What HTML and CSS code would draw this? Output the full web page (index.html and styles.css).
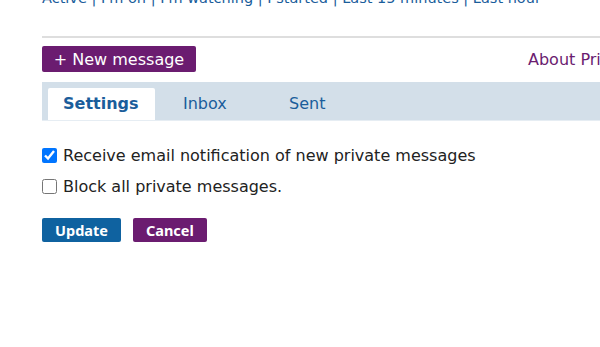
FILE: index.html
```html
<!DOCTYPE html>
<html lang="en">
<head>
  <meta charset="UTF-8">
  <title>Private messages</title>
  <link rel="stylesheet" href="styles.css">
</head>
<body>
  <div class="page">
    <div class="filters">
      <a href="#">Active</a> | <a href="#">I'm on</a> | <a href="#">I'm watching</a> | <a href="#">I started</a> | <a href="#">Last 15 minutes</a> | <a href="#">Last hour</a>
    </div>
    <div class="actions">
      <button class="new-button">+ New message</button>
      <a class="about-link" href="#">About Private messages</a>
    </div>
    <div class="tabs">
      <div class="tab active">Settings</div>
      <div class="tab">Inbox</div>
      <div class="tab">Sent</div>
    </div>
    <form class="settings">
      <label class="option"><input type="checkbox" checked> Receive email notification of new private messages</label>
      <label class="option"><input type="checkbox"> Block all private messages.</label>
      <div class="buttons">
        <button type="button" class="update-button">Update</button>
        <button type="button" class="cancel-button">Cancel</button>
      </div>
    </form>
  </div>
</body>
</html>
```

FILE: styles.css
```css
body {
  margin: 0;
  font-family: 'DejaVu Sans', Verdana, sans-serif;
  font-size: 16px;
  color: #222;
  background: #fff;
  overflow: hidden;
}

.page {
  padding-left: 42px;
  white-space: nowrap;
}

.filters {
  margin-top: -12px;
  font-size: 14.5px;
  line-height: 20px;
  padding-bottom: 28px;
  border-bottom: 2px solid #dedede;
  color: #1a5d9b;
}

.filters a {
  color: #1a5d9b;
  text-decoration: none;
}

.actions {
  display: flex;
  align-items: center;
  gap: 332px;
  margin-top: 8px;
}

.actions > * {
  flex-shrink: 0;
}

.new-button {
  background: #6b1c70;
  color: #fff;
  border: none;
  border-radius: 2px;
  font-family: inherit;
  font-size: 16px;
  width: 154px;
  height: 26px;
  padding: 0;
}

.about-link {
  color: #6b1c70;
  text-decoration: none;
}

.tabs {
  display: flex;
  background: #d3dfe9;
  margin-top: 10px;
  padding: 6px 0 0 6px;
  height: 32px;
  border-bottom: 1px solid #e6edf3;
}

.tab {
  box-sizing: border-box;
  width: 107px;
  padding-left: 28px;
  color: #1a5d9b;
  line-height: 32px;
}

.tab:last-child {
  padding-left: 27px;
}

.tab.active {
  padding-left: 15px;
  background: #fff;
  font-weight: bold;
  border-radius: 2px 2px 0 0;
}

.settings {
  margin-top: 26px;
}

.option {
  display: flex;
  align-items: center;
  gap: 6px;
  height: 16px;
  margin-bottom: 15px;
}

.option input {
  margin: 0;
  width: 15px;
  height: 15px;
}

.buttons {
  display: flex;
  gap: 12px;
  margin-top: 24px;
}

.buttons button {
  border: none;
  border-radius: 2px;
  color: #fff;
  font-family: 'Noto Sans', sans-serif;
  font-weight: bold;
  font-size: 14.5px;
  height: 24px;
  padding: 0 13px;
}

.update-button {
  background: #0f62a0;
}

.cancel-button {
  background: #6b1c70;
}
```
